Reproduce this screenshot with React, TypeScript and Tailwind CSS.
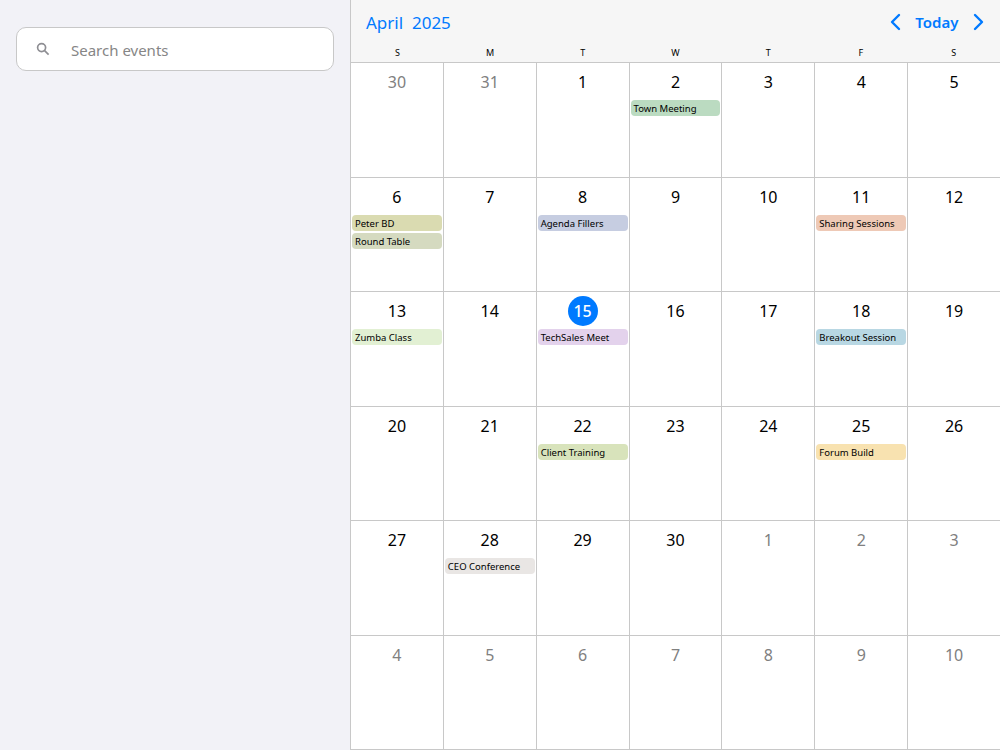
import React from "react";

type Ev = { t: string; c: string };
const events: Record<number, Ev[]> = {
  3: [{ t: "Town Meeting", c: "bg-[#bbdbc1]" }],
  7: [{ t: "Peter BD", c: "bg-[#dadbb1]" }, { t: "Round Table", c: "bg-[#d5dac0]" }],
  9: [{ t: "Agenda Fillers", c: "bg-[#c6cde1]" }],
  12: [{ t: "Sharing Sessions", c: "bg-[#eec9b6]" }],
  14: [{ t: "Zumba Class", c: "bg-[#e2f0d3]" }],
  16: [{ t: "TechSales Meet", c: "bg-[#e3d2ec]" }],
  19: [{ t: "Breakout Session", c: "bg-[#b8d7e3]" }],
  23: [{ t: "Client Training", c: "bg-[#d8e3bb]" }],
  26: [{ t: "Forum Build", c: "bg-[#f8e2b0]" }],
  29: [{ t: "CEO Conference", c: "bg-[#e9e6e4]" }],
};

const days = [30, 31, 1, 2, 3, 4, 5, 6, 7, 8, 9, 10, 11, 12, 13, 14, 15, 16, 17, 18, 19, 20, 21, 22, 23, 24, 25, 26, 27, 28, 29, 30, 1, 2, 3, 4, 5, 6, 7, 8, 9, 10];

export default function App() {
  return (
    <div className="flex h-[750px] w-[1000px] overflow-hidden bg-white font-['Noto_Sans','Open_Sans',sans-serif]">
      <aside className="w-[350px] shrink-0 bg-[#f2f2f7] px-4 pt-[27px]">
        <div className="flex h-11 w-[318px] items-center rounded-[10px] border border-[#c8c8c8] bg-white">
          <svg className="ml-[18.5px] mt-[-1px] h-[14px] w-[14px]" viewBox="0 0 14 14" fill="none" stroke="#8e8e93" strokeWidth="1.7">
            <circle cx="5.6" cy="5.6" r="4" />
            <path d="M8.6 8.6 L12.6 12.6" />
          </svg>
          <span className="ml-[21.5px] pt-[2px] text-[15px] text-[#868686]">Search events</span>
        </div>
      </aside>
      <main className="flex w-[650px] flex-col">
        <header className="h-[63px] shrink-0 border-b border-l border-[#c8c8c8] bg-[#f6f6f6]">
          <div className="flex h-[46px] items-center justify-between pl-[15px] pr-[15.5px]">
            <span className="whitespace-pre text-[17px] text-[#007aff]">April  2025</span>
            <div className="flex items-center pb-[2px]">
              <svg className="h-[18px] w-[12px]" viewBox="0 0 12 18" fill="none" stroke="#007aff" strokeWidth="2.4" strokeLinecap="round" strokeLinejoin="round">
                <path d="M10 2 L3 9 L10 16" />
              </svg>
              <span className="mx-[14px] text-[15px] font-semibold text-[#007aff]">Today</span>
              <svg className="h-[18px] w-[12px]" viewBox="0 0 12 18" fill="none" stroke="#007aff" strokeWidth="2.4" strokeLinecap="round" strokeLinejoin="round">
                <path d="M2 2 L9 9 L2 16" />
              </svg>
            </div>
          </div>
          <div className="grid grid-cols-7">
            {["S", "M", "T", "W", "T", "F", "S"].map((d, i) => (
              <div key={i} className="text-center text-[9px] leading-[13px] text-black">{d}</div>
            ))}
          </div>
        </header>
        <div className="grid min-h-0 flex-1 grid-cols-7 grid-rows-6">
          {days.map((d, i) => {
            const muted = i < 2 || i > 31;
            const today = i === 16;
            return (
              <div key={i} className="flex flex-col items-stretch border-b border-l border-[#c8c8c8]">
                <div className="flex h-[37px] items-center justify-center pt-px">
                  {today ? (
                    <span className="flex h-[30px] w-[30px] items-center justify-center rounded-full bg-[#007aff] text-[16px] font-medium text-white">{d}</span>
                  ) : (
                    <span className={`text-[16px] ${muted ? "text-[#808080]" : "text-black"}`}>{d}</span>
                  )}
                </div>
                <div className="flex flex-col gap-[2px] px-px">
                  {(events[i] || []).map((e) => (
                    <div key={e.t} className={`h-4 truncate rounded-[4px] pl-[3px] pt-px text-[9.5px] leading-4 text-black ${e.c}`}>{e.t}</div>
                  ))}
                </div>
              </div>
            );
          })}
        </div>
      </main>
    </div>
  );
}
